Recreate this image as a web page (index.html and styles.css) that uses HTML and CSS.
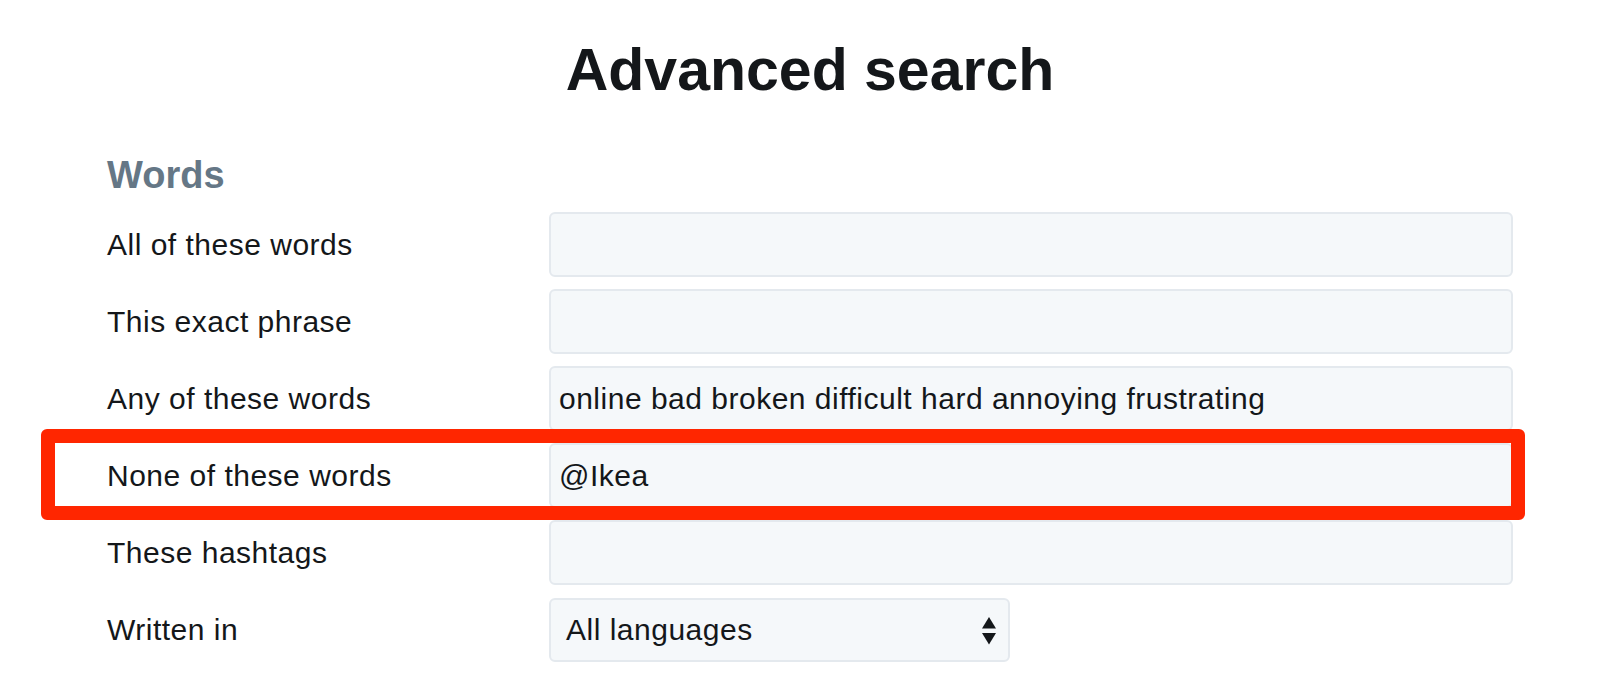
FILE: index.html
```html
<!DOCTYPE html>
<html lang="en">
<head>
<meta charset="utf-8">
<title>Advanced search</title>
<link rel="stylesheet" href="styles.css">
</head>
<body>
<main class="page">
  <h1 class="title">Advanced search</h1>
  <h2 class="section">Words</h2>
  <div class="rows">
    <div class="row">
      <div class="label">All of these words</div>
      <div class="field"></div>
    </div>
    <div class="row">
      <div class="label">This exact phrase</div>
      <div class="field"></div>
    </div>
    <div class="row">
      <div class="label">Any of these words</div>
      <div class="field">online bad broken difficult hard annoying frustrating</div>
    </div>
    <div class="row row-marked">
      <div class="label">None of these words</div>
      <div class="field">@Ikea</div>
      <div class="highlight"></div>
    </div>
    <div class="row">
      <div class="label">These hashtags</div>
      <div class="field"></div>
    </div>
    <div class="row">
      <div class="label">Written in</div>
      <div class="select">
        <span>All languages</span>
        <svg class="arrows" width="14" height="28" viewBox="0 0 14 28" aria-hidden="true">
          <path d="M7 0 L14 11.5 L0 11.5 Z" fill="#14171a"/>
          <path d="M0 16 L14 16 L7 27.5 Z" fill="#14171a"/>
        </svg>
      </div>
    </div>
  </div>
</main>
</body>
</html>
```
FILE: styles.css
```css
html, body {
  margin: 0;
  padding: 0;
  background: #ffffff;
}

body {
  font-family: "Liberation Sans", Arial, Helvetica, sans-serif;
  color: #14171a;
}

.page {
  width: 1406px;
  margin: 0 auto;
}

.title {
  margin: 36px 0 0;
  font-size: 59px;
  line-height: 68px;
  font-weight: 700;
  text-align: center;
  color: #14171a;
}

.section {
  margin: 49px 0 15px;
  font-size: 38px;
  line-height: 44px;
  font-weight: 700;
  color: #657786;
}

.rows {
  display: flex;
  flex-direction: column;
  gap: 12px;
}

.row {
  position: relative;
  display: grid;
  grid-template-columns: 442px 1fr;
  align-items: center;
  height: 65px;
}

.label {
  font-size: 30px;
  line-height: 36px;
  letter-spacing: 0.5px;
  color: #14171a;
}

.field,
.select {
  box-sizing: border-box;
  height: 65px;
  background: #f5f8fa;
  border: 2px solid #e4e9ee;
  border-radius: 6px;
  font-size: 30px;
  line-height: 36px;
  letter-spacing: 0.5px;
  color: #14171a;
  display: flex;
  align-items: center;
}

.field {
  padding: 0 8px;
}

.select {
  width: 461px;
  height: 64px;
  padding: 0 12px 0 15px;
  justify-content: space-between;
}

.arrows {
  display: block;
  margin-top: 2px;
}

.highlight {
  position: absolute;
  left: -66px;
  top: -14px;
  right: -12px;
  bottom: -12px;
  border: 14px solid #ff2600;
  border-radius: 6px;
  pointer-events: none;
}
```
